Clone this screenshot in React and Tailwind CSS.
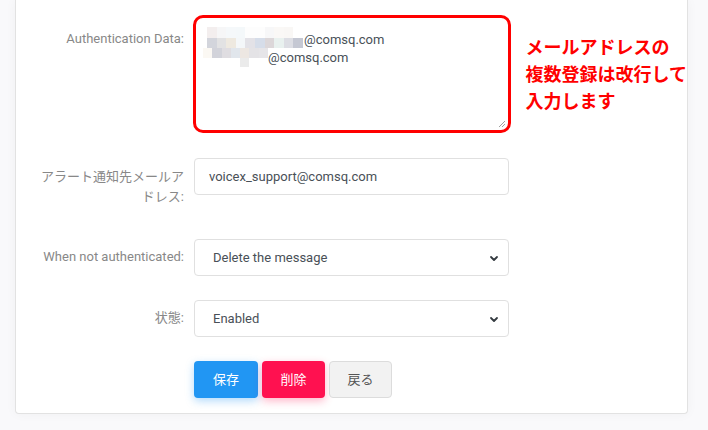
import React from "react";

const FONT = { fontFamily: "Roboto, 'Noto Sans CJK JP', sans-serif" };

const mosaic1 = [
  ["#f3eeee", "#f6f6f7", "#f5f8fa", "#f4f8fa", "#fdfdfd", "#fdfdfd", "#f7f7f8", "#faf8f6", "#f9f7f5", "#ffffff"],
  ["#d3d5dc", "#e2e2e3", "#eee9e0", "#f4f7f9", "#e3e2e7", "#d6dde9", "#dcd7d9", "#e9f1ef", "#dddee4", "#c5c8d3"],
];
const mosaic2 = [
  ["#fbf8f3", "#d2d3da", "#dfdde1", "#e1e6ec", "#ede7e2", "#e4e3e6", "#e6e5e8"],
  ["#ffffff", "#ffffff", "#ffffff", "#ffffff", "#ebebeb", "#ffffff", "#ffffff"],
];

function Mosaic({ rows, className }) {
  return (
    <div className={"absolute flex flex-col " + className}>
      {rows.map((r, i) => (
        <div key={i} className="flex flex-1">
          {r.map((c, j) => (
            <div key={j} className="flex-1" style={{ background: c }} />
          ))}
        </div>
      ))}
    </div>
  );
}

function Chevron() {
  return (
    <svg width="10" height="7" viewBox="0 0 10 7" className="absolute right-[9px] top-[15px]">
      <path d="M2 2 L5 5 L8 2" fill="none" stroke="#343a40" strokeWidth="1.8" strokeLinecap="round" strokeLinejoin="round" />
    </svg>
  );
}

function Label({ children, className = "" }) {
  return (
    <div className={"w-[168px] shrink-0 text-right text-[13px] leading-[20px] text-[#888] " + className}>
      {children}
    </div>
  );
}

export default function App() {
  return (
    <div className="w-[708px] h-[430px] overflow-hidden bg-[#f9f9fb]" style={FONT}>
      <div className="ml-[15px] w-[673px] bg-white border-x border-b border-[#e2e2e2] rounded-b-[4px] shadow-[0_0_12px_rgba(0,0,0,0.04)] pt-[15px] pb-[15px]">
        {/* Row 1 */}
        <div className="flex items-start h-[118px]">
          <Label className="pt-[14px]">Authentication Data:</Label>
          <div className="relative ml-[9px] w-[318px] h-[118px] border-[3px] border-[#ff0000] rounded-[10px] bg-white pl-[10px] pt-[13px] text-[13px] leading-[18px] text-[#495057]">
            <div>
              <span className="inline-block w-[98px]" />@comsq.com
            </div>
            <div>
              <span className="inline-block w-[62px]" />@comsq.com
            </div>
            <Mosaic rows={mosaic1} className="left-[11px] top-[9px] w-[96px] h-[21px]" />
            <Mosaic rows={mosaic2} className="left-[7px] top-[30px] w-[65px] h-[19px]" />
            <svg width="8" height="8" viewBox="0 0 8 8" className="absolute right-[2px] bottom-[2px]">
              <path d="M1 7 L7 1 M4 7 L7 4" stroke="#888" strokeWidth="0.8" />
            </svg>
          </div>
          <div
            className="ml-[15px] mt-[18px] whitespace-nowrap text-[18px] leading-[27px] font-bold text-[#ff0000]"
            style={{ fontFamily: "'Noto Sans CJK JP', sans-serif" }}
          >
            メールアドレスの
            <br />
            複数登録は改行して
            <br />
            入力します
          </div>
        </div>

        {/* Row 2 */}
        <div className="flex mt-[25px] h-[57px]">
          <Label className="pt-[9px]">
            アラート通知先メールア
            <br />
            ドレス:
          </Label>
          <div className="ml-[10px] w-[315px] h-[37px] border border-[#e0e0e0] rounded-[4px] pl-[14px] flex items-center text-[13px] text-[#495057]">
            voicex_support@comsq.com
          </div>
        </div>

        {/* Row 3 */}
        <div className="flex mt-[24px]">
          <Label className="pt-[8px]">When not authenticated:</Label>
          <div className="relative ml-[10px] w-[315px] h-[37px] border border-[#e0e0e0] rounded-[4px] pl-[18px] flex items-center text-[13px] text-[#495057]">
            Delete the message
            <Chevron />
          </div>
        </div>

        {/* Row 4 */}
        <div className="flex mt-[24px]">
          <Label className="pt-[8px]">状態:</Label>
          <div className="relative ml-[10px] w-[315px] h-[37px] border border-[#e0e0e0] rounded-[4px] pl-[18px] flex items-center text-[13px] text-[#495057]">
            Enabled
            <Chevron />
          </div>
        </div>

        {/* Buttons */}
        <div className="flex mt-[24px] pl-[178px] gap-[4px] text-[13px]">
          <div className="w-[64px] h-[37px] rounded-[4px] bg-[#2196f3] text-white flex items-center justify-center shadow-[0_3px_8px_rgba(33,150,243,0.35)]">
            保存
          </div>
          <div className="w-[63px] h-[37px] rounded-[4px] bg-[#ff1150] text-white flex items-center justify-center shadow-[0_3px_8px_rgba(255,17,80,0.3)]">
            削除
          </div>
          <div className="w-[63px] h-[37px] rounded-[4px] bg-[#f2f2f2] border border-[#dcdcdc] text-[#555] flex items-center justify-center">
            戻る
          </div>
        </div>
      </div>
    </div>
  );
}
